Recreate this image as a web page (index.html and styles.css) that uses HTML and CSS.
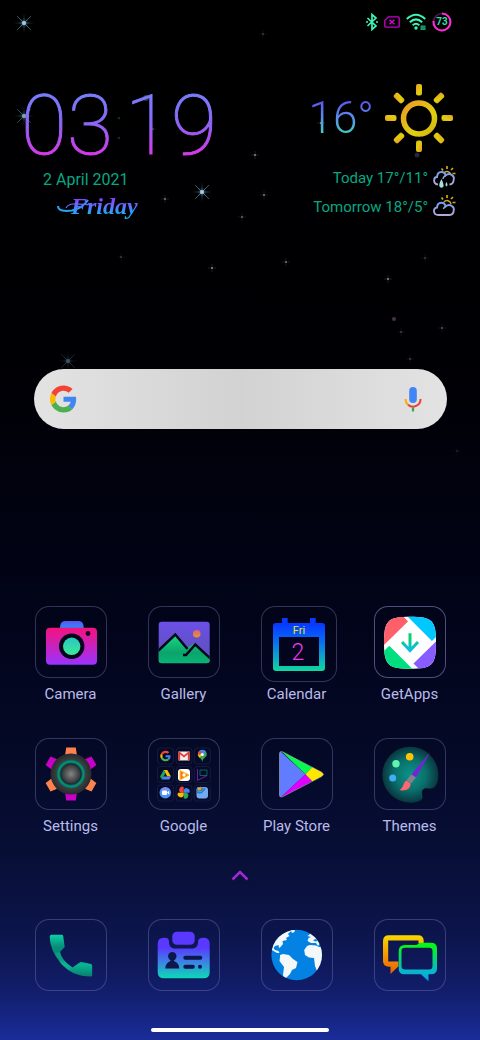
FILE: index.html
```html
<!DOCTYPE html>
<html lang="en">
<head>
<meta charset="utf-8">
<meta name="viewport" content="width=device-width, initial-scale=1">
<title>Home screen</title>
<link rel="stylesheet" href="styles.css">
</head>
<body>
<div class="screen">
  <svg class="stars" width="480" height="480" viewBox="0 0 480 480" aria-hidden="true">
    <defs>
      <radialGradient id="glow"><stop offset="0" stop-color="#8cc4dc"/><stop offset="1" stop-color="#5a8ca0" stop-opacity="0"/></radialGradient>
      <g id="flare">
        <path d="M-11-11 11 11M11-11-11 11M0-9V9M-9 0H9" stroke="url(#glow)" stroke-width="1" opacity=".55"/>
        <path d="M-7-7 7 7M7-7-7 7" stroke="#6ba0b4" stroke-width="1" opacity=".45"/>
        <circle r="5" fill="url(#glow)" opacity=".4"/><circle r="2" fill="#9ccfe4"/>
      </g>
      <g id="spark"><path d="M-4 0H4M0-4V4" stroke="#999" stroke-width="1" opacity=".25"/><circle r="1" fill="#aaa"/></g>
    </defs>
    <use href="#flare" x="24" y="23"/><use href="#flare" x="24" y="116" opacity=".8"/>
    <use href="#flare" x="202" y="192"/><use href="#flare" x="68" y="361" opacity=".4"/>
    <use href="#spark" x="165" y="199" opacity=".7"/><use href="#spark" x="153" y="129" opacity=".4"/>
    <use href="#spark" x="263" y="34" opacity=".35"/><use href="#spark" x="321" y="123" opacity=".9"/>
    <use href="#spark" x="255" y="155" opacity=".8"/><use href="#spark" x="264" y="195" opacity=".7"/>
    <use href="#spark" x="242" y="217" opacity=".6"/><use href="#spark" x="121" y="257" opacity=".35"/>
    <use href="#spark" x="212" y="268" opacity=".8"/><use href="#spark" x="286" y="262" opacity=".7"/>
    <use href="#spark" x="388" y="279" opacity=".8"/><use href="#spark" x="425" y="258" opacity=".35"/>
    <use href="#spark" x="401" y="332" opacity=".4"/><use href="#spark" x="442" y="328" opacity=".5"/>
    <use href="#spark" x="410" y="359" opacity=".4"/><use href="#spark" x="457" y="451" opacity=".2"/>
    <circle cx="394" cy="319" r="2" fill="#4a3048"/><circle cx="417" cy="155" r="2.5" fill="#26263a"/>
    <circle cx="146" cy="98" r="3" fill="#333348"/>
  </svg>

  <header class="status">
    <svg width="12" height="18" viewBox="0 0 12 18" role="img" aria-label="Bluetooth"><path d="M1.500 5 10 13 6 16.500V1.500L10 5 1.500 13" fill="none" stroke="#3df5b5" stroke-width="1.700"/><circle cx="1" cy="9" r="1" fill="#3df5b5"/><circle cx="11" cy="9" r="1" fill="#3df5b5"/></svg>
    <svg width="16" height="12" viewBox="0 0 16 12" role="img" aria-label="No SIM"><path d="M4.500.8H14.200Q15.200.8 15.200 1.800V10.200Q15.200 11.200 14.200 11.200H1.800Q.8 11.200.8 10.200V4.500Z" fill="none" stroke="#c800c8" stroke-width="1.300"/><path d="M5.500 3.800 10.500 8.300M10.500 3.800 5.500 8.300" stroke="#d800d8" stroke-width="1.500"/></svg>
    <svg width="20" height="18" viewBox="0 0 20 18" role="img" aria-label="Wi-Fi"><g fill="none" stroke="#3df5b5" stroke-width="2"><path d="M.8 6Q10-2.500 19.200 6M3.800 9.200Q10 3.500 16.200 9.200M6.700 12.200Q10 9.200 13.300 12.200"/></g><circle cx="10" cy="15" r="1.700" fill="#3df5b5"/><path d="M14.500 12.500h5v4.500h-5z" fill="#15a57c"/><path d="M16 13.500v2.500M18 13.500v2.500" stroke="#063" stroke-width=".7"/></svg>
    <div class="battery"><svg width="20" height="20" viewBox="0 0 20 20" aria-hidden="true"><circle cx="10" cy="10" r="8.500" fill="none" stroke="#541654" stroke-width="1.700"/><path d="M10 1.500A8.500 8.500 0 1 1 1.500 9" fill="none" stroke="#ff2bd6" stroke-width="2"/></svg><span>73</span></div>
  </header>

  <section class="widgets">
    <div class="clock">
      <time class="time" datetime="03:19"><span class="digits">03</span><span class="colon">:</span><span class="digits">19</span></time>
      <div class="date">2 April 2021</div>
      <div class="weekday"><svg class="swash" width="36" height="16" viewBox="0 0 36 16" aria-hidden="true"><path d="M1 8C1 13 8 13.500 15 12.500 22 11 27 8 31 2" fill="none" stroke="#22a6f5" stroke-width="2"/><path d="M9 10C12 4 20 6 34 7" fill="none" stroke="#5a70ff" stroke-width="1.200"/></svg><span>Friday</span></div>
    </div>
    <div class="weather">
      <div class="now"><span class="temp">16°</span>
        <svg width="70" height="70" viewBox="0 0 70 70" role="img" aria-label="Sunny"><defs><linearGradient id="sun" x1="0" y1="0" x2="1" y2="1"><stop offset="0" stop-color="#ec9a25"/><stop offset=".65" stop-color="#e0d00e"/><stop offset="1" stop-color="#d4b010"/></linearGradient></defs><circle cx="35" cy="35.500" r="15.500" fill="none" stroke="url(#sun)" stroke-width="5.500"/>
        <g fill="url(#sun)"><rect id="ray" x="32" y="1" width="6" height="11.500" rx="2"/><use href="#ray" transform="rotate(45 35 35)"/><use href="#ray" transform="rotate(90 35 35)"/><use href="#ray" transform="rotate(135 35 35)"/><use href="#ray" transform="rotate(180 35 35)"/><use href="#ray" transform="rotate(225 35 35)"/><use href="#ray" transform="rotate(270 35 35)"/><use href="#ray" transform="rotate(315 35 35)"/></g></svg>
      </div>
      <div class="forecast"><span>Today 17°/11°</span>
        <svg width="23" height="24" viewBox="0 0 23 24" role="img" aria-label="Rain and sun"><defs><linearGradient id="cloud" x1="0" y1="0" x2="0" y2="1"><stop offset="0" stop-color="#6fa2ea"/><stop offset="1" stop-color="#b9a6d8"/></linearGradient><g id="minisun" fill="none" stroke="#d3a61c"><path d="M11 7A4 4 0 0 1 18 9" stroke-width="1.500"/><path d="M14 0V3M8.500 2.500 10 4.500M20 2 18 4M19.500 7.500H22.500" stroke-width="1.700"/></g></defs><use href="#minisun"/><path d="M5 18.500C-.5 17.500.5 11 4 11 4.500 4 12 5 12.500 9.500 17 6 21.500 10 20.800 13 20.500 17.500 18 18.500 16.500 18.500" fill="none" stroke="url(#cloud)" stroke-width="1.900"/><path d="M12.500 9.500Q10 11 10 13" fill="none" stroke="#8ca6e0" stroke-width="1.500"/><path d="M8.500 13Q5.500 18 6.500 20.500 8.500 23 10.500 20.500 11 18 8.500 13ZM13.500 16Q11.500 19 13.500 20.500 15.500 19.500 13.500 16Z" fill="#a8dce0"/></svg>
      </div>
      <div class="forecast"><span>Tomorrow 18°/5°</span>
        <svg width="23" height="24" viewBox="0 0 23 24" role="img" aria-label="Partly cloudy"><use href="#minisun"/><path d="M5.500 20C-.5 20 0 12.500 4 12.500 4.500 6 12 6.500 12.500 11.500 17 8 21.500 12 20.800 15 20.500 19.500 18 20 16.500 20Z" fill="none" stroke="url(#cloud)" stroke-width="1.900"/><path d="M12.500 11.500Q10.500 12.500 10.500 14" fill="none" stroke="#8ca6e0" stroke-width="1.500"/></svg>
      </div>
    </div>
  </section>

  <form class="search" role="search">
    <svg width="27" height="28" viewBox="0 0 48 48" aria-hidden="true"><defs><g id="g"><path fill="#4285f4" d="M46.500 24.500c0-1.600-.2-3.200-.4-4.700H24v9h12.700c-.6 3-2.300 5.500-4.800 7.200l7.700 6c4.500-4.200 6.900-10.300 6.900-17.500z"/><path fill="#4caf50" d="M24 48c6.500 0 11.900-2.100 15.900-5.800l-7.700-6C30 37.600 27.200 38.500 24 38.500c-6.300 0-11.600-4.200-13.500-9.900l-8 6.200C6.500 42.600 14.600 48 24 48z"/><path fill="#fbbc05" d="M10.500 28.600c-.5-1.500-.8-3-.8-4.600s.3-3.100.8-4.600l-8-6.200C.9 16.500 0 20.100 0 24s.9 7.500 2.600 10.800z"/><path fill="#f44336" d="M24 9.500c3.500 0 6.700 1.200 9.200 3.600l6.900-6.900C35.900 2.400 30.500 0 24 0 14.600 0 6.500 5.400 2.600 13.200l8 6.200C12.400 13.700 17.700 9.500 24 9.500z"/></g></defs><use href="#g"/></svg>
    <input class="query" type="search" aria-label="Search">
    <button class="mic" type="button" aria-label="Voice search"><svg width="18" height="26" viewBox="0 0 18 26"><rect x="5.200" y="1" width="7.600" height="16" rx="3.800" fill="#4285f4"/><path d="M1.500 13A7.500 7.500 0 0 0 4 18.700" fill="none" stroke="#fbab05" stroke-width="2"/><path d="M4 18.700A7.500 7.500 0 0 0 16.500 13" fill="none" stroke="#ea4335" stroke-width="2"/><path d="M9 21.500V25.500" stroke="#34a853" stroke-width="2.200"/></svg></button>
  </form>

  <main class="apps">
    <a class="app" href="#camera"><span class="slot"><span class="tile"><svg viewBox="0 0 72 72" aria-hidden="true"><defs><linearGradient id="cam" x1="0" y1="0" x2="0" y2="1"><stop offset="0" stop-color="#f5127c"/><stop offset="1" stop-color="#9933ff"/></linearGradient><linearGradient id="bump" x1="0" y1="0" x2="0" y2="1"><stop offset="0" stop-color="#5a58ee"/><stop offset="1" stop-color="#2e86ff"/></linearGradient><linearGradient id="lens" x1="0" y1="0" x2="0" y2="1"><stop offset="0" stop-color="#28c8c0"/><stop offset="1" stop-color="#3ee89a"/></linearGradient></defs><path d="M25 22Q25 15 30 15H44Q48.700 15 48.700 22Z" fill="url(#bump)"/><rect x="11" y="21.700" width="51" height="37" rx="4" fill="url(#cam)"/><circle cx="36.700" cy="40.300" r="12.700" fill="#04051a"/><circle cx="36.700" cy="40.300" r="8.700" fill="url(#lens)"/><circle cx="53" cy="27.500" r="2.400" fill="#180522"/></svg></span></span><span class="label">Camera</span></a>
    <a class="app" href="#gallery"><span class="slot"><span class="tile"><svg viewBox="0 0 72 72" aria-hidden="true"><defs><linearGradient id="sky" x1="0" y1="0" x2="0" y2="1"><stop offset="0" stop-color="#6c50e8"/><stop offset="1" stop-color="#5b50b4"/></linearGradient><linearGradient id="hill" x1="0" y1="0" x2="0" y2="1"><stop offset="0" stop-color="#16dc80"/><stop offset=".6" stop-color="#0ba36b"/><stop offset="1" stop-color="#08b878"/></linearGradient><linearGradient id="orb" x1="0" y1="0" x2="0" y2="1"><stop offset="0" stop-color="#e85a88"/><stop offset="1" stop-color="#dca018"/></linearGradient><clipPath id="frame"><rect x="10.700" y="15.700" width="51" height="41.500" rx="3"/></clipPath></defs><g clip-path="url(#frame)"><path d="M10 15H62V57H10Z" fill="url(#sky)"/><circle cx="48.700" cy="27.800" r="3.800" fill="url(#orb)"/><path d="M9 46 27.300 28.500 39 42 47 37 63 52V59H9Z" fill="url(#hill)"/><path d="M8 47 27.300 28.500 39.500 43M35 49H38L47.300 38.500 64 54" fill="none" stroke="#04051a" stroke-width="2.500"/></g></svg></span></span><span class="label">Gallery</span></a>
    <a class="app" href="#calendar"><span class="slot"><span class="tile large"><svg viewBox="0 0 76 76" aria-hidden="true"><defs><linearGradient id="cal" x1="0" y1="0" x2="0" y2="1"><stop offset=".12" stop-color="#0839ff"/><stop offset=".4" stop-color="#0865f8"/><stop offset="1" stop-color="#10d8a0"/></linearGradient></defs><path d="M21 12H26.700V17H49V12H54.700V17H61Q64 17 64 20V62Q64 65 61 65H15Q12 65 12 62V20Q12 17 15 17H21ZM18 31V60H58V31Z" fill="url(#cal)" fill-rule="evenodd"/><text class="cal-day" x="38" y="28">Fri</text><text class="cal-num" x="37" y="54">2</text></svg></span></span><span class="label">Calendar</span></a>
    <a class="app" href="#getapps"><span class="slot"><span class="tile bright"><svg viewBox="0 0 72 72" aria-hidden="true"><defs><clipPath id="squircle"><path d="M36 10.700C58 10.700 62 14 62 36.700S58 62.700 36 62.700 10 59 10 36.700 14 10.700 36 10.700Z"/></clipPath><linearGradient id="arrow" gradientUnits="userSpaceOnUse" x1="0" y1="27" x2="0" y2="46"><stop offset=".25" stop-color="#06d36d"/><stop offset="1" stop-color="#10b8f8"/></linearGradient></defs><g clip-path="url(#squircle)"><path d="M9 9H63V64H9Z" fill="#fff"/><path d="M8 8H27L34 15.500 9 40Z" fill="#ff5e6b"/><path d="M31 8 58 35 64 29V8Z" fill="#00c8ff"/><path d="M63 34.500 39.500 57.500 46 64H64Z" fill="#885cff"/><path d="M8 47 15.300 39.700 39 63.500H8Z" fill="#00df80"/></g><path d="M36 27.300V45M28 36 36 44.500 44 36" fill="none" stroke="url(#arrow)" stroke-width="3"/></svg></span></span><span class="label">GetApps</span></a>
    <a class="app" href="#settings"><span class="slot"><span class="tile"><svg viewBox="0 0 72 72" aria-hidden="true"><defs><radialGradient id="gear"><stop offset=".5" stop-color="#4a4c4c"/><stop offset="1" stop-color="#252a2c"/></radialGradient><radialGradient id="knob"><stop offset="0" stop-color="#858585"/><stop offset="1" stop-color="#303535"/></radialGradient><path id="tooth" d="M30 18 31.200 9.500H40.800L42 18Z"/></defs><g fill="#ff814d"><use href="#tooth"/><use href="#tooth" transform="rotate(120 36 36)"/><use href="#tooth" transform="rotate(240 36 36)"/></g><g fill="#c800c8"><use href="#tooth" transform="rotate(60 36 36)"/><use href="#tooth" transform="rotate(180 36 36)"/><use href="#tooth" transform="rotate(300 36 36)"/></g><circle cx="36" cy="36" r="20.500" fill="url(#gear)"/><circle cx="36" cy="36" r="12.500" fill="#202c34" stroke="#08608c" stroke-width="3.500"/><circle cx="36" cy="36" r="12.500" fill="none" stroke="#05964e" stroke-width="2"/><circle cx="36" cy="36" r="9.500" fill="url(#knob)"/></svg></span></span><span class="label">Settings</span></a>
    <a class="app" href="#google"><span class="slot"><span class="tile"><svg viewBox="0 0 72 72" aria-hidden="true"><g fill="none" stroke="#1b1f42" stroke-width=".8"><rect x="9.500" y="10" width="16" height="16" rx="3"/><rect x="28" y="10" width="16" height="16" rx="3"/><rect x="46.300" y="10" width="16" height="16" rx="3"/><rect x="9.500" y="28.500" width="16" height="16" rx="3"/><rect x="28" y="28.500" width="16" height="16" rx="3"/><rect x="46.300" y="28.500" width="16" height="16" rx="3"/><rect x="9.500" y="47" width="16" height="16" rx="3"/><rect x="28" y="47" width="16" height="16" rx="3"/><rect x="46.300" y="47" width="16" height="16" rx="3"/></g>
      <use href="#g" transform="translate(12.300 12.800) scale(.22)"/>
      <path d="M30.500 13.500H41.500V22.500H30.500Z" fill="#eee"/><path d="M31.300 22.500V14.500L36 18.500 40.700 14.500V22.500" fill="none" stroke="#e53a30" stroke-width="1.700"/>
      <path d="M54.300 24C54 20 49.800 19 49.800 16.500A4.500 4.500 0 0 1 58.800 16.500C58.800 19 54.700 20 54.300 24Z" fill="#34a853"/><path d="M49.900 17A4.500 4.500 0 0 1 52 12.700L55 15.500 51.500 20Z" fill="#fbbc05"/><path d="M50 15A4.500 4.500 0 0 1 58.300 14.300L54 17Z" fill="#4285f4"/><path d="M50 15Q50.500 13 52.200 12.700L53.500 14.500 51 17.500Z" fill="#ea4335"/><circle cx="54.300" cy="16.500" r="1.500" fill="#fff"/>
      <path d="M15.700 32H19.300L23 38.500H19.300Z" fill="#fbbc05"/><path d="M15.700 32 17.500 35 14 41.500 12 38.500Z" fill="#1da462"/><path d="M15.500 38.500H23L21.300 41.500H13.800Z" fill="#4688f4"/>
      <rect x="30" y="31" width="12" height="12" rx="3" fill="#fff"/><path d="M32 32.500 41 37 32 42Z" fill="#f57c18" stroke="#ffbe18" stroke-width="1"/><circle cx="36" cy="37" r="1.700" fill="#fff"/>
      <path d="M49.500 31V42.500L59 37.500" fill="none" stroke="#7a18a8" stroke-width="1"/><path d="M52 32H59V37.500H52Z" fill="none" stroke="#087868" stroke-width=".8"/>
      <circle cx="17.300" cy="54.700" r="5.800" fill="#4d92f7"/><path d="M12.500 52A5.800 5.800 0 0 1 22.100 52Z" fill="#8a88e8"/><rect x="14" y="52.500" width="5" height="4.500" rx="1" fill="#fff"/><path d="M19 54.500 21.200 52.800V56.700Z" fill="#fff"/>
      <path d="M35.700 54.700V49A3 3 0 0 0 33 54.700Z" fill="#f44336"/><path d="M35.700 54.700H41.300A3 3 0 0 0 35.700 52Z" fill="#4285f4"/><path d="M35.700 54.700V60.300A3 3 0 0 0 38.500 54.700Z" fill="#34a853"/><path d="M35.700 54.700H30A3 3 0 0 0 35.700 57.500Z" fill="#fbbc05"/>
      <rect x="48.500" y="49" width="11.500" height="11.500" rx="3" fill="#75a9ed"/><path d="M49 51.500Q52 54 54.500 51L52.500 49.500ZM49 54Q54 57 57 50" fill="none" stroke="#2878dc" stroke-width="1.500"/><path d="M49 49.500H55L51 53.500Z" fill="#eea02d"/><path d="M49 52.500 52 53 55 49.500" stroke="#2a9960" fill="none"/></svg></span></span><span class="label">Google</span></a>
    <a class="app" href="#play"><span class="slot"><span class="tile"><svg viewBox="0 0 72 72" aria-hidden="true"><defs><clipPath id="playshape"><path d="M18.500 16Q18.500 12.500 22 14L60.500 34Q64 36.300 60.500 38.700L22 58.500Q18.500 60 18.500 57Z"/></clipPath></defs><g clip-path="url(#playshape)"><path d="M18 12V61L44.500 36.300Z" fill="#627cff"/><path d="M18 11 44.500 36.300 51.500 29.500Z" fill="#08f850"/><path d="M18 61 44.500 36.300 51.500 43Z" fill="#df00ff"/><path d="M44.500 36.300 51.500 29 65 36.300 51.500 43.500Z" fill="#ffe800"/></g><path d="M18.500 16Q18.500 12.500 22 14L60.500 34Q64 36.300 60.500 38.700L22 58.500Q18.500 60 18.500 57Z" fill="none" stroke="#b0b8c0" stroke-width=".8" opacity=".7"/></svg></span></span><span class="label">Play Store</span></a>
    <a class="app" href="#themes"><span class="slot"><span class="tile"><svg viewBox="0 0 72 72" aria-hidden="true"><defs><radialGradient id="pal"><stop offset="0" stop-color="#0b9289"/><stop offset=".55" stop-color="#0b716d"/><stop offset="1" stop-color="#08373f"/></radialGradient></defs><path d="M64.300 36.700C64.300 45 62 49 58 50.500 54 51 52 49 49 51.500 46.500 54 49 57 48.500 60 47 64 40 64.700 36.300 64.700A28 28 0 1 1 64.300 36.700Z" fill="url(#pal)"/><circle cx="35.700" cy="18.700" r="3.800" fill="#ffc400"/><circle cx="22" cy="25.700" r="3.700" fill="#5df5b0"/><circle cx="18.700" cy="40" r="3.500" fill="#40aef5"/><path d="M56 14.300 37.500 36.500 42 39.500Z" fill="#7622dc"/><path d="M37.500 36.500 42 39.500 37 45.500 32.500 42Z" fill="#82828a"/><path d="M32.500 42.500C29 44 30 49.500 25.300 52 31 53.500 37 51 36.500 45.500Z" fill="#ff6670"/></svg></span></span><span class="label">Themes</span></a>
  </main>

  <button class="drawer" type="button" aria-label="All apps"><svg width="18" height="12" viewBox="0 0 18 12"><path d="M1.500 10.500 9 3 16.500 10.500" fill="none" stroke="#9c2bd2" stroke-width="2.500"/></svg></button>

  <nav class="dock" aria-label="Dock">
    <a class="app" href="#phone" aria-label="Phone"><span class="tile"><svg viewBox="0 0 72 72" aria-hidden="true"><defs><linearGradient id="ph" gradientUnits="userSpaceOnUse" x1="0" y1="15" x2="0" y2="58"><stop offset="0" stop-color="#0cd3ac"/><stop offset=".3" stop-color="#078e78"/><stop offset=".6" stop-color="#0a8070"/><stop offset=".7" stop-color="#0ab796"/><stop offset="1" stop-color="#077c6c"/></linearGradient></defs><path d="M16.500 15.700H26.500Q28 15.700 28.200 17L29.700 28 25 33Q26 41 37.500 48.500 41 46 45.700 42.700L56 45Q57.300 45.500 57.200 47V56Q57 57.500 55.500 57.500 37 57.500 25.500 44 14.700 31 14.700 17.500 14.700 16 16.500 15.700Z" fill="url(#ph)"/><path d="M25 33Q27 41.500 37.500 48.500L34 51Q23 43 20 34Z" fill="#12b896" opacity=".45"/></svg></span></a>
    <a class="app" href="#contacts" aria-label="Contacts"><span class="tile"><svg viewBox="0 0 72 72" aria-hidden="true"><defs><linearGradient id="con" gradientUnits="userSpaceOnUse" x1="0" y1="18" x2="0" y2="60"><stop offset=".25" stop-color="#5938ff"/><stop offset=".6" stop-color="#3c84e4"/><stop offset="1" stop-color="#08dfb4"/></linearGradient></defs><path d="M16 18.700C20 18.700 21 20 21 23 21 27 23 29.500 27 29.500H44C48 29.500 50 27 50 23 50 20 52 18.700 55.500 18.700 60 18.700 61.700 21 61.700 25V53Q61.700 59.300 55.500 59.300H16Q9.700 59.300 9.700 53V25Q9.700 18.700 16 18.700Z" fill="url(#con)"/><rect x="24.300" y="12.700" width="22.400" height="13" rx="4.500" fill="#5938ff"/><g fill="#0d174e"><circle cx="24.300" cy="37.300" r="4.200"/><path d="M22.500 39H26V42Q31.300 44 31.300 49.500H17.300Q17.300 44 22.500 42Z"/><rect x="35.300" y="36.800" width="19" height="4" rx="2"/><rect x="35.300" y="45.700" width="11.500" height="4" rx="2"/><circle cx="52" cy="47.700" r="2"/></g></svg></span></a>
    <a class="app" href="#browser" aria-label="Browser"><span class="tile"><svg viewBox="0 0 72 72" aria-hidden="true"><defs><clipPath id="globe"><circle cx="35.700" cy="36" r="25.300"/></clipPath></defs><circle cx="35.700" cy="36" r="25.300" fill="#0482e4"/><g clip-path="url(#globe)" fill="#f4f8f8"><path d="M9 8H34L29 13 27 15 28.500 17 25 19 26 21 21.500 22 22 25 19.500 28 18 29 17.500 26 14 27 12.500 29 14 31 17.500 32 18.500 34 16 34 10 30.500Z"/><path d="M29 10H34L33.500 13 31 14 30 12Z"/><path d="M19 36 22 35 28 36 32 40 36.500 43 35 49 31 51 29 55 25 59 23.500 61 22 56 23 48 18.500 42 19 38Z"/><path d="M48 10 64 20V28L58.500 25 57 27 55 24 50 24 46.500 22 47.500 19 50 18 46.500 17 49 15Z"/><path d="M49 26 55 26.500 58 28 62 28V44L56 52 54 47 53 39 48 38.500 44 36 43.200 31 46 27Z"/></g><path d="M52 21 55 20 57 22 54 22.500Z" fill="#0482e4"/></svg></span></a>
    <a class="app" href="#messages" aria-label="Messages"><span class="tile"><svg viewBox="0 0 72 72" aria-hidden="true"><defs><linearGradient id="ora" gradientUnits="userSpaceOnUse" x1="0" y1="16" x2="0" y2="55"><stop offset="0" stop-color="#f8d800"/><stop offset="1" stop-color="#ee5c00"/></linearGradient><linearGradient id="grn" gradientUnits="userSpaceOnUse" x1="0" y1="24" x2="0" y2="61"><stop offset=".1" stop-color="#05f51b"/><stop offset=".75" stop-color="#08b8c8"/><stop offset="1" stop-color="#08a0e8"/></linearGradient></defs><path d="M15 16.300H44Q49.700 16.300 49.700 22V24.500H44.500V21.500H14.200V42.500H24.500V47.300L16.500 55V47.700H15Q9 47.700 9 42V22Q9 16.300 15 16.300Z" fill="url(#ora)"/><path d="M31 26H42.500L46 23.700H57Q63 23.700 63 29.500V49.500Q63 55.300 57 55.300H54.500V62.300L47 55.300H30Q24.700 55.300 24.700 49.500V32Q24.700 26 31 26ZM31 28.700Q27.500 28.700 27.500 32V47Q27.500 50.500 31 50.500H55Q58.500 50.500 58.500 47V32Q58.500 28.700 55 28.700Z" fill="url(#grn)" fill-rule="evenodd"/></svg></span></a>
  </nav>
  <div class="homebar"></div>
</div>
</body>
</html>
```
FILE: styles.css
```css
* { box-sizing: border-box; }

body {
  margin: 0;
  background: #000;
  font-family: Roboto, "Noto Sans", sans-serif;
  font-size: 15px;
  line-height: 20px;
}

svg { display: block; }
a { color: inherit; text-decoration: none; }
button { border: 0; padding: 0; background: none; }

.screen {
  position: relative;
  min-height: 100vh;
  display: flex;
  flex-direction: column;
  padding-bottom: 8px;
  background: linear-gradient(#000 0%, #000004 35%, #01020f 48%, #02041a 60%, #040926 72%, #080f38 83%, #0c154c 90%, #111d68 95%, #1a2c98 100%);
}

.stars { position: absolute; top: 0; left: 0; max-width: 100%; }
.status, .widgets, .search { position: relative; }

.status {
  display: flex;
  justify-content: flex-end;
  align-items: center;
  gap: 6px;
  height: 44px;
  padding-right: 28px;
}

.battery { position: relative; }
.battery span {
  position: absolute;
  inset: 0;
  text-align: center;
  font-size: 10px;
  font-weight: 700;
  color: #38dcae;
}

.widgets {
  display: flex;
  justify-content: space-between;
  padding: 38px 24px 0 21px;
  color: #06a883;
}

.clock { display: flex; flex-direction: column; }

.time {
  display: flex;
  align-items: center;
  height: 88px;
  font-size: 84px;
  font-weight: 100;
  line-height: 84px;
}
.digits {
  background: linear-gradient(#7a7cff 15%, #8a68f8 45%, #d838ea 85%);
  background-clip: text;
  color: transparent;
  -webkit-text-stroke: 1px transparent;
}
.colon { width: 12px; text-align: center; font-size: 40px; line-height: 40px; color: #063b35; }

.date { padding-left: 22px; font-size: 16px; }

.weekday {
  display: flex;
  align-items: center;
  padding-left: 36px;
  height: 32px;
}
.weekday span {
  font: italic 700 24px/32px "Liberation Serif", serif;
  background: linear-gradient(#9630f8 20%, #6070ff 50%, #10b8f8 80%);
  background-clip: text;
  color: transparent;
}
.swash { margin-right: -22px; }

.weather { display: flex; flex-direction: column; align-items: flex-end; }
.now { display: flex; align-items: center; gap: 10px; height: 72px; margin-bottom: 9px; padding-right: 2px; }
.temp {
  font-size: 44px;
  font-weight: 300;
  line-height: 60px;
  background: linear-gradient(#5a52f0 20%, #5a90e8 50%, #40d8c0 80%);
  background-clip: text;
  color: transparent;
}
.forecast { display: flex; align-items: center; gap: 5px; height: 29px; }

.search {
  display: flex;
  align-items: center;
  height: 60px;
  margin: 147px 33px 0 34px;
  padding: 0 25px 0 16px;
  border-radius: 30px;
  background: linear-gradient(90deg, #e3e3e3, #d2d2d2 50%, #e3e3e3);
}
.query {
  flex: 1;
  min-width: 0;
  height: 40px;
  border: 0;
  outline: 0;
  background: none;
  font: inherit;
}

.apps, .dock {
  display: grid;
  grid-template-columns: repeat(4, 1fr);
  padding: 0 14px;
}
.apps { row-gap: 34px; margin-top: auto; }

.app { display: flex; flex-direction: column; align-items: center; }
.slot { display: flex; align-items: flex-start; width: 72px; height: 78px; }

.tile {
  flex: none;
  width: 72px;
  height: 72px;
  border-radius: 14px;
  box-shadow: inset 0 0 0 1px rgba(140, 140, 200, 0.35);
}
.tile.large { width: 76px; height: 76px; }
.tile.bright { box-shadow: inset 0 0 0 1px rgba(160, 150, 220, 0.5); }

.label { color: #b9bbea; }

.cal-day { font-size: 11px; fill: #e0e820; text-anchor: middle; }
.cal-num { font-size: 23px; font-weight: 300; fill: #f038e8; text-anchor: middle; }

.drawer { align-self: center; margin: 33px 0 38px; }

.dock { margin-bottom: 37px; }

.homebar {
  align-self: center;
  width: 37%;
  height: 4px;
  border-radius: 2px;
  background: #fff;
}
```
